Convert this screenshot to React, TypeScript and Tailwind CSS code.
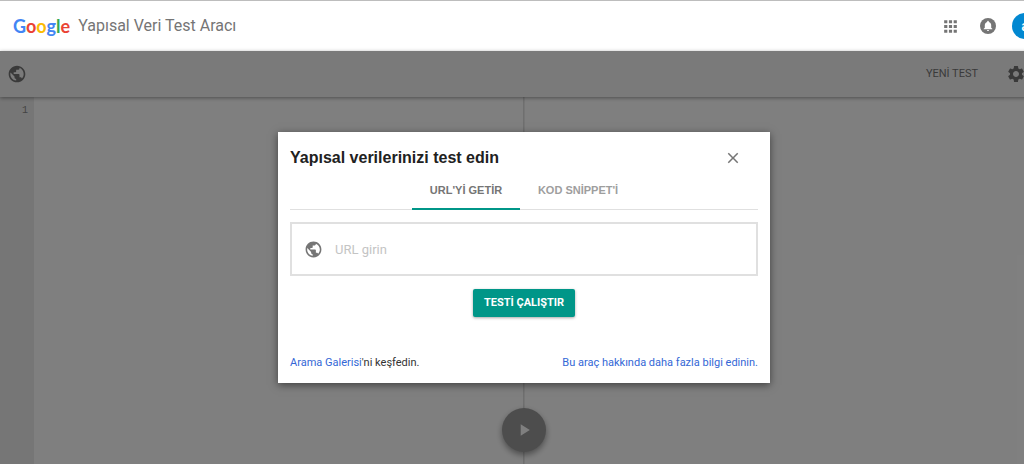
import { MdApps, MdClose, MdPlayArrow, MdPublic, MdSettings } from "react-icons/md";

const logo = [
	{ letter: "G", color: "text-[#4285f4]" },
	{ letter: "o", color: "text-[#ea4335]" },
	{ letter: "o", color: "text-[#fbbc05]" },
	{ letter: "g", color: "text-[#4285f4]" },
	{ letter: "l", color: "text-[#34a853]" },
	{ letter: "e", color: "text-[#ea4335]" },
];

function Bell() {
	return (
		<svg viewBox="0 0 16 16" className="size-4">
			<circle cx="8" cy="8" r="8" fill="#757575" />
			<path
				fill="#fff"
				d="M8 2.8c-.5 0-.8.3-.8.8v.3C5.6 4.3 4.8 5.6 4.8 7.2v2.5L3.7 10.8v.5h8.6v-.5l-1.1-1.1V7.2c0-1.6-.8-2.9-2.4-3.3v-.3c0-.5-.3-.8-.8-.8zM6.9 11.9a1.1 1.1 0 0 0 2.2 0z"
			/>
		</svg>
	);
}

function Header() {
	return (
		<header className="flex h-[51px] items-center border-t border-[#bdbdbd] bg-white pl-[13px]">
			<h1 className="flex flex-1 items-center gap-2 whitespace-nowrap">
				<span className="font-['Lato',sans-serif] text-[18px] leading-6 font-bold">
					{logo.map(({ letter, color }, index) => (
						<span className={color} key={index}>
							{letter}
						</span>
					))}
				</span>
				<span className="text-[16px] leading-6 text-[#757575]">
					Yapısal Veri Test Aracı
				</span>
			</h1>
			<div className="flex items-center gap-5">
				<button type="button" aria-label="Uygulamalar" className="text-[#757575]">
					<MdApps className="size-[19px]" />
				</button>
				<button type="button" aria-label="Bildirimler">
					<Bell />
				</button>
				<button
					type="button"
					className="-ml-1 size-[26px] rounded-full bg-[#0288d1] text-sm leading-6 font-medium text-white"
				>
					a
				</button>
			</div>
			<div className="w-[10px]" />
		</header>
	);
}

function Toolbar() {
	return (
		<div className="relative z-10 flex h-[46px] items-center justify-between bg-[#f4f4f4] pr-[22px] pl-[7px] text-[#757575] shadow-[0_1px_4px_rgba(0,0,0,0.4)]">
			<MdPublic className="size-5" />
			<div className="flex items-center gap-7">
				<button type="button" className="text-[11px] leading-4">
					YENİ TEST
				</button>
				<button type="button" aria-label="Ayarlar">
					<MdSettings className="size-5" />
				</button>
			</div>
		</div>
	);
}

function Editor() {
	return (
		<div className="relative flex flex-1 bg-white">
			<div className="flex flex-1 border-r border-[#dedede]">
				<div className="w-[34px] bg-[#ededed] pt-[6px] pr-[6px] text-right font-['Liberation_Mono',monospace] text-[10px] leading-4 text-[#888]">
					1
				</div>
			</div>
			<div className="flex-1 border-l border-[#ececec]" />
			<button
				type="button"
				aria-label="Testi çalıştır"
				className="absolute bottom-3 left-1/2 flex size-11 -translate-x-1/2 items-center justify-center rounded-full bg-[#9a9a9a] text-white shadow-[0_3px_6px_rgba(0,0,0,0.4)]"
			>
				<MdPlayArrow className="size-5" />
			</button>
		</div>
	);
}

function TestDialog() {
	return (
		<div
			role="dialog"
			aria-labelledby="dialog-title"
			className="w-[492px] max-w-full bg-white px-3 pt-4 pb-3 shadow-[0_2px_8px_rgba(0,0,0,0.5)]"
		>
			<div className="flex items-center justify-between pr-4 text-[#212121]">
				<h2
					id="dialog-title"
					className="font-['Liberation_Sans',sans-serif] text-[16px] leading-5 font-bold"
				>
					Yapısal verilerinizi test edin
				</h2>
				<button type="button" aria-label="Kapat" className="text-[#757575]">
					<MdClose className="size-[18px]" />
				</button>
			</div>

			<div
				role="tablist"
				className="flex items-start justify-center border-b border-[#e0e0e0] font-['Liberation_Sans',sans-serif] text-[11px] leading-4 font-bold"
			>
				<button
					type="button"
					role="tab"
					aria-selected="true"
					className="-mb-px h-[42px] w-[108px] border-b-2 border-[#009688] pt-1 text-[#757575]"
				>
					URL'Yİ GETİR
				</button>
				<button
					type="button"
					role="tab"
					aria-selected="false"
					className="h-10 w-[116px] pt-1 text-[#9e9e9e]"
				>
					KOD SNİPPET'İ
				</button>
			</div>

			<form>
				<label className="mt-3 flex h-[54px] items-center gap-3 border-2 border-[#e0e0e0] px-3 text-[#757575]">
					<MdPublic className="size-[19px]" />
					<input
						type="text"
						aria-label="URL girin"
						placeholder="URL girin"
						className="min-w-0 flex-1 pt-0.5 text-[13px] leading-5 text-[#212121] outline-none placeholder:text-[#c4c4c4]"
					/>
				</label>
				<button
					type="button"
					className="mx-auto mt-[13px] block h-7 rounded-[2px] bg-[#009688] px-[11px] text-[11px] leading-4 font-bold text-white shadow-[0_1px_3px_rgba(0,0,0,0.35)]"
				>
					TESTİ ÇALIŞTIR
				</button>
			</form>

			<div className="mt-[38px] flex justify-between text-[11px] leading-4 text-[#333]">
				<p>
					<a href="#galeri" className="text-[#3367d6]">
						Arama Galerisi
					</a>
					'ni keşfedin.
				</p>
				<a href="#bilgi" className="text-[#3367d6]">
					Bu araç hakkında daha fazla bilgi edinin.
				</a>
			</div>
		</div>
	);
}

export default function App() {
	return (
		<div className="min-h-screen overflow-hidden font-['Roboto',sans-serif]">
			{/* the page runs 24px past the right edge of the window */}
			<div className="-mr-6 flex min-h-screen flex-col">
				<Header />
				<main className="relative flex flex-1 flex-col">
					<Toolbar />
					<Editor />
					<div className="absolute inset-0 z-20 flex items-start justify-center bg-black/50 pt-[81px]">
						<TestDialog />
					</div>
				</main>
			</div>
		</div>
	);
}
